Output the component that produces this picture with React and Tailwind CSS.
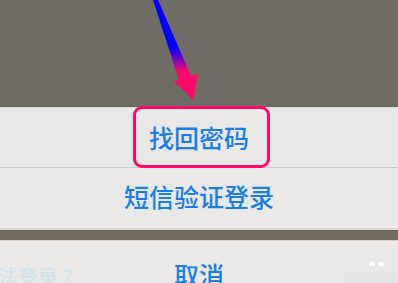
export default function App() {
  const font = { fontFamily: '"Noto Sans CJK SC", "Noto Sans", sans-serif' };
  return (
    <div className="relative w-[398px] h-[283px] overflow-hidden bg-[#e9e8e6]" style={font}>
      <div className="flex flex-col">
        <div className="h-[107px] bg-[#6e6c64]" />
        <div className="h-[61px] border-t border-[#d8d7d4] border-b border-b-[#cdccc9] flex items-center justify-center text-[25px] font-medium text-[#1a7ee4] leading-none">
          <span className="-mt-[1px]">找回密码</span>
        </div>
        <div className="h-[62px] flex items-center justify-center text-[25px] font-medium text-[#1a7ee4] leading-none border-b-2 border-[#dcdad5]">
          <span className="-mt-[4px]">短信验证登录</span>
        </div>
        <div className="h-[10px] bg-[#716a60]" />
        <div className="relative h-[43px] border-t border-[#d6d4d0] flex justify-center text-[25px] font-medium text-[#1a7ee4] leading-none">
          <span className="mt-[21px]">取消</span>
          <span className="absolute left-[-22px] top-[26px] text-[20px] text-[#d2e2ea] leading-none">无法登录 ?</span>
          <div className="absolute left-[369px] top-[20px] w-[6px] h-[5px] rounded-t-full bg-white" />
          <div className="absolute left-[378px] top-[21px] w-[6px] h-[4px] rounded-t-full bg-white" />
          <div className="absolute left-[345px] top-[30px] w-[53px] h-[13px] bg-[#e3e4e4]" />
        </div>
      </div>
      <div className="absolute left-[133px] top-[106px] w-[137px] h-[62px] rounded-[9px] border-[3px] border-[#ff0a6c]" />
      <svg className="absolute left-0 top-0" width="398" height="110" viewBox="0 0 398 110">
        <defs>
          <linearGradient id="g" x1="0" y1="0" x2="0" y2="1" gradientUnits="objectBoundingBox">
            <stop offset="0" stopColor="#0000ff" />
            <stop offset="0.48" stopColor="#0000ff" />
            <stop offset="0.72" stopColor="#ff0a6c" />
            <stop offset="1" stopColor="#ff0a6c" />
          </linearGradient>
        </defs>
        <path d="M153 0 L158 0 L191 76 L198 74 L193 100 L174 81 L179 80 Z" fill="url(#g)" />
      </svg>
    </div>
  );
}
